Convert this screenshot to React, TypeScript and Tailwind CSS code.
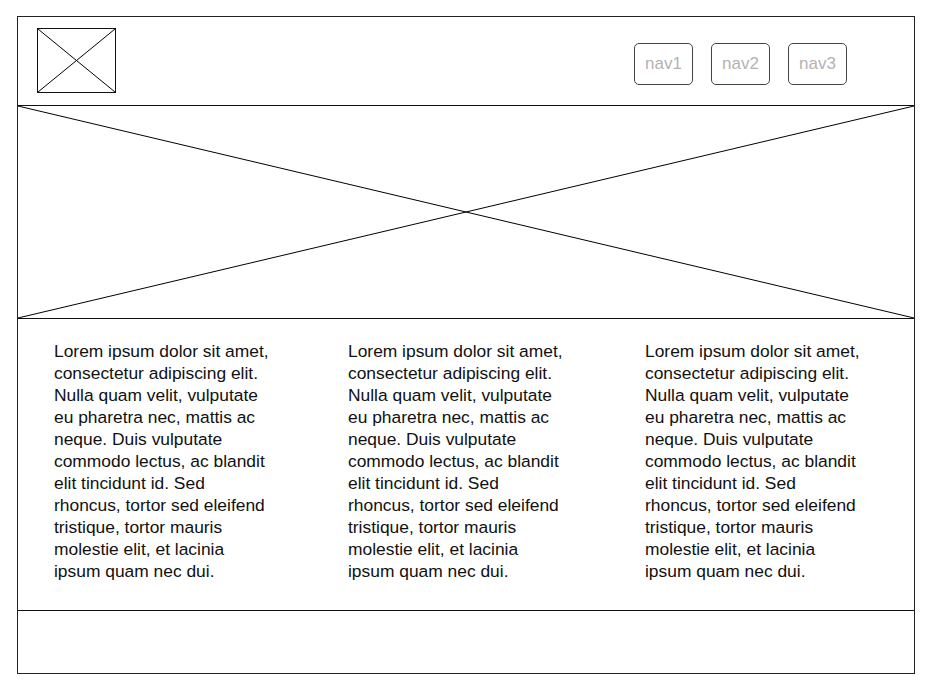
import React from "react";

const LOREM =
  "Lorem ipsum dolor sit amet, consectetur adipiscing elit. Nulla quam velit, vulputate eu pharetra nec, mattis ac neque. Duis vulputate commodo lectus, ac blandit elit tincidunt id. Sed rhoncus, tortor sed eleifend tristique, tortor mauris molestie elit, et lacinia ipsum quam nec dui.";

function Cross({ className }: { className?: string }) {
  return (
    <svg className={className} viewBox="0 0 100 100" preserveAspectRatio="none">
      <line x1="0" y1="0" x2="100" y2="100" stroke="#000" strokeWidth="1" vectorEffect="non-scaling-stroke" />
      <line x1="100" y1="0" x2="0" y2="100" stroke="#000" strokeWidth="1" vectorEffect="non-scaling-stroke" />
    </svg>
  );
}

export default function App() {
  return (
    <div className="w-[932px] h-[692px] bg-white pt-[16px] pl-[17px]" style={{ fontFamily: '"Liberation Sans", Arial, sans-serif' }}>
      <div className="w-[898px] h-[658px] border border-[#222] flex flex-col">
        <header className="h-[89px] border-b border-[#111] flex items-start justify-between">
          <div className="ml-[19px] mt-[11px] w-[79px] h-[65px] border border-[#111] relative">
            <Cross className="absolute inset-0 w-full h-full" />
          </div>
          <nav className="flex gap-[18px] mt-[26px] mr-[67px]">
            {["nav1", "nav2", "nav3"].map((n) => (
              <div
                key={n}
                className="w-[59px] h-[42px] border border-[#444] rounded-[5px] flex items-center justify-center text-[17px] text-[#b3b3b3]"
              >
                {n}
              </div>
            ))}
          </nav>
        </header>
        <div className="h-[213px] border-b border-[#111] relative">
          <Cross className="absolute inset-0 w-full h-full" />
        </div>
        <section className="h-[292px] border-b border-[#111] grid grid-cols-[294px_297px_1fr] pl-[36px] pt-[21px]">
          {[0, 1, 2].map((i) => (
            <p key={i} className="w-[216px] text-[17.4px] leading-[22px] text-[#111]">
              {LOREM}
            </p>
          ))}
        </section>
        <footer className="flex-1" />
      </div>
    </div>
  );
}
